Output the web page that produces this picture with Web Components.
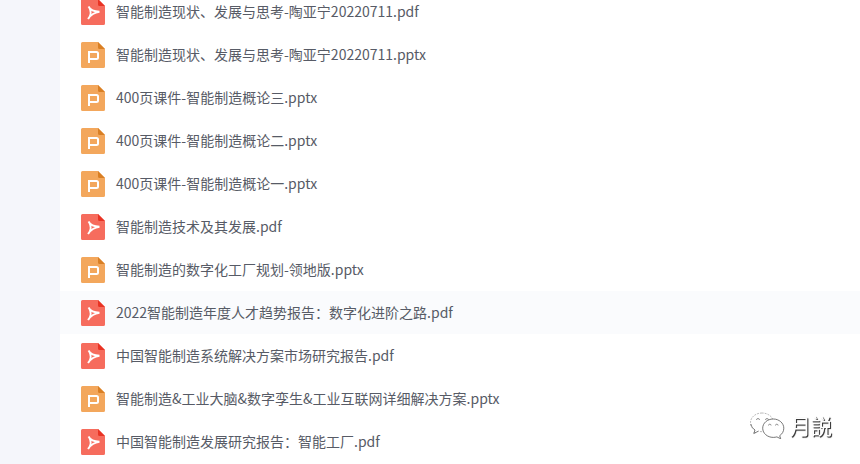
<!DOCTYPE html>
<html lang="zh-CN">
<head>
<meta charset="UTF-8">
<title>文件列表</title>
<style>
  body {
    margin: 0;
    background: #fff;
    color: #575b66;
    font-family: "Noto Sans CJK SC", sans-serif;
    font-size: 14px;
    overflow: hidden;
  }
</style>
</head>
<body>
<drive-page>
  <file-list></file-list>
  <account-mark slot="mark">月説</account-mark>
</drive-page>

<script>
const files = [
  { name: "智能制造现状、发展与思考-陶亚宁20220711.pdf" },
  { name: "智能制造现状、发展与思考-陶亚宁20220711.pptx" },
  { name: "400页课件-智能制造概论三.pptx" },
  { name: "400页课件-智能制造概论二.pptx" },
  { name: "400页课件-智能制造概论一.pptx" },
  { name: "智能制造技术及其发展.pdf" },
  { name: "智能制造的数字化工厂规划-领地版.pptx" },
  { name: "2022智能制造年度人才趋势报告：数字化进阶之路.pdf", active: true },
  { name: "中国智能制造系统解决方案市场研究报告.pdf" },
  { name: "智能制造&工业大脑&数字孪生&工业互联网详细解决方案.pptx" },
  { name: "中国智能制造发展研究报告：智能工厂.pdf" }
];

class FileIcon extends HTMLElement {
  constructor() {
    super();
    this.attachShadow({ mode: "open" });
  }

  connectedCallback() {
    const pdf = this.getAttribute("type") === "pdf";
    const sheet = pdf ? "#f66c5d" : "#f3a75c";
    const fold = pdf ? "#e93324" : "#d97f24";
    const sign = pdf
      ? `<path d="M7.500 7.500C9 10.500 12 12.600 18.500 12.600M18.500 12.800C13.500 13.300 10 15.300 7 20M8.200 8.500C10.300 12 10 15.500 8 19" stroke-width="1.8"/>`
      : `<path d="M8 21V10h7.500a1.500 1.500 0 0 1 1.500 1.500v4a1.500 1.500 0 0 1-1.500 1.500H8" stroke-width="2"/>`;

    this.shadowRoot.innerHTML = `
      <style>
        :host {
          display: block;
          flex: none;
          width: 24px;
          height: 26px;
        }
        svg {
          display: block;
        }
      </style>
      <svg width="24" height="26" viewBox="0 0 24 26" fill="none" stroke="#fff" aria-hidden="true">
        <path d="M1.500 0H17l7 7v17.500a1.500 1.500 0 0 1-1.500 1.500h-21A1.500 1.500 0 0 1 0 24.500v-23A1.500 1.500 0 0 1 1.500 0Z" fill="${sheet}" stroke="none"/>
        <path d="M17 0l7 7h-5.500A1.500 1.500 0 0 1 17 5.500Z" fill="${fold}" stroke="none"/>
        ${sign}
      </svg>
    `;
  }
}

class FileRow extends HTMLElement {
  constructor() {
    super();
    this.attachShadow({ mode: "open" });
  }

  connectedCallback() {
    this.shadowRoot.innerHTML = `
      <style>
        :host {
          display: flex;
          align-items: flex-start;
          gap: 11px;
          padding: 9px 21px 8px;
        }
        :host([active]), :host(:hover) {
          background: #fafbfd;
        }
        a {
          color: inherit;
          line-height: 24px;
          text-decoration: none;
          white-space: nowrap;
        }
      </style>
      <file-icon type="${this.getAttribute("type")}"></file-icon>
      <a href="#"><slot></slot></a>
    `;
  }
}

class FileList extends HTMLElement {
  constructor() {
    super();
    this.attachShadow({ mode: "open" });
  }

  connectedCallback() {
    this.shadowRoot.innerHTML = `
      <style>
        :host {
          display: block;
        }
      </style>
    `;

    files.forEach((file) => {
      const row = document.createElement("file-row");
      row.setAttribute("type", file.name.split(".").pop());
      if (file.active) row.setAttribute("active", "");
      row.textContent = file.name;
      this.shadowRoot.appendChild(row);
    });
  }
}

// Account mark, floats over the list
class AccountMark extends HTMLElement {
  constructor() {
    super();
    this.attachShadow({ mode: "open" });
  }

  connectedCallback() {
    this.shadowRoot.innerHTML = `
      <style>
        :host {
          position: fixed;
          right: 28px;
          bottom: 25px;
          display: flex;
          align-items: center;
          gap: 5px;
          color: #fff;
          font-size: 21px;
          line-height: 28px;
          text-shadow: 1px 1px 1px #333, 1px 1px 0 #777;
        }
      </style>
      <svg width="36" height="28" viewBox="0 0 36 28" fill="#fff" stroke="#aaa" stroke-width="0.8" aria-hidden="true">
        <path d="M13 2C6.500 2 1.500 6.300 1.500 11.500c0 3.200 1.700 5.800 4.500 7.500L4.800 22.500l4.500-2.300c1.200.3 2.400.5 3.700.5 6.400 0 11.500-4.100 11.500-9.200S19.400 2 13 2Z" stroke-dasharray="2 1"/>
        <path d="M1.800 13C2.500 15.800 3.900 17.700 6 19L4.800 22.500l4.500-2.300" stroke="#666" fill="none"/>
        <path d="M24.300 8c-6 0-10.600 4.100-10.600 9.200s4.600 9.200 10.600 9.200c1.300 0 2.500-.2 3.600-.5l3.800 1.900-1-3.100c2.500-1.700 4.100-4.400 4.100-7.500 0-5.100-4.700-9.200-10.500-9.200Z" stroke="#555"/>
        <g fill="none" stroke="#777">
          <path d="M7.500 9a1.500 1.500 0 0 1 3 0M16.500 9a1.500 1.500 0 0 1 3 0M19.500 14.500a1.300 1.300 0 0 1 2.600 0M26.500 14.500a1.300 1.300 0 0 1 2.600 0"/>
        </g>
      </svg>
      <span><slot></slot></span>
    `;
  }
}

class DrivePage extends HTMLElement {
  constructor() {
    super();
    this.attachShadow({ mode: "open" });
  }

  connectedCallback() {
    this.shadowRoot.innerHTML = `
      <style>
        :host {
          display: flex;
          height: 100vh;
          overflow: hidden;
        }
        aside {
          flex: none;
          width: 60px;
          background: #f5f6fb;
        }
        main {
          flex: 1;
          min-width: 0;
          margin-top: -10px;
        }
      </style>
      <aside></aside>
      <main><slot></slot></main>
      <slot name="mark"></slot>
    `;
  }
}

customElements.define("file-icon", FileIcon);
customElements.define("file-row", FileRow);
customElements.define("file-list", FileList);
customElements.define("account-mark", AccountMark);
customElements.define("drive-page", DrivePage);
</script>
</body>
</html>
